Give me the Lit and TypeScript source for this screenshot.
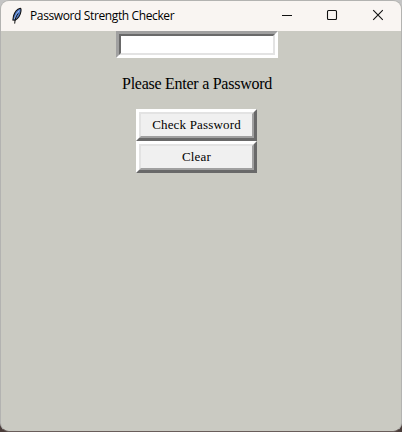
import { LitElement, html, css } from "lit";
import { customElement } from "lit/decorators.js";

@customElement("app-root")
export class AppRoot extends LitElement {
  static styles = css`
    :host {
      display: block;
      width: 402px;
      height: 432px;
      overflow: hidden;
      background: linear-gradient(#c4c4c4 0 38px, #8fa5b5 48px 66px, #aaa 72px 400px, #4a3d3a 412px);
    }
    * { box-sizing: border-box; }
    .window {
      width: 402px;
      height: 432px;
      border: 1px solid #b3b3b1;
      border-bottom-color: #695e5b;
      border-radius: 9px;
      overflow: hidden;
      background: #cacac2;
      display: flex;
      flex-direction: column;
    }
    .titlebar {
      flex: none;
      height: 30px;
      background: #f9f5f2;
      display: flex;
      align-items: center;
      font: 12px/16px "Open Sans", "Noto Sans", sans-serif;
      color: #000;
    }
    .feather { margin-left: 9px; flex: none; }
    .title { margin-left: 8px; letter-spacing: -0.38px; flex: 1; white-space: nowrap; }
    .controls { flex: none; }
    .client {
      flex: 1;
      display: flex;
      flex-direction: column;
      align-items: center;
      width: 392px;
      font-family: "Liberation Serif", serif;
      color: #000;
    }
    .edge { border: 3px solid; }
    .inner { border: 2px solid; height: 100%; }
    .entry {
      width: 162px;
      height: 27px;
      border-color: #a0a0a0 #fff #fff #a0a0a0;
    }
    .entry .inner {
      border-color: #696969 #e3e3e3 #e3e3e3 #696969;
      background: #fff;
    }
    .prompt {
      margin-top: 16px;
      height: 35px;
      font-size: 16px;
      line-height: 20px;
      letter-spacing: -0.26px;
      white-space: nowrap;
    }
    .button {
      width: 121px;
      height: 32px;
      margin-right: 1px;
      border-color: #fff #696969 #696969 #fff;
    }
    .button .inner {
      border-color: #e3e3e3 #a0a0a0 #a0a0a0 #e3e3e3;
      background: #f0f0f0;
      display: flex;
      align-items: center;
      justify-content: center;
      font-size: 13px;
      line-height: 16px;
      letter-spacing: 0.17px;
      white-space: nowrap;
    }
  `;

  render() {
    return html`
      <div class="window">
        <div class="titlebar">
          <svg class="feather" width="12" height="18" viewBox="-0.5 0 12 18">
            <path d="M9.8 1.2C7 2 4 5.5 3 9L2.4 13L4.6 13.3C7.5 11.5 10 7.5 10.4 4.5C10.6 3 10.6 1 9.8 1.2Z" fill="#4c78c8" stroke="#111" stroke-width="1.1" />
            <path d="M8.8 3.5C6.5 6 4.8 9 4.2 12" fill="none" stroke="#a9c6f2" stroke-width="1" />
            <path d="M7.6 6.4C5.6 9 4.4 12 4.2 16.6" fill="none" stroke="#111" stroke-width="1" />
          </svg>
          <span class="title">Password Strength Checker</span>
          <svg class="controls" width="132" height="30" viewBox="269 1 132 30" fill="none" stroke="#111">
            <path d="M282 15.5H292" />
            <rect x="327.5" y="10.5" width="9" height="9" rx="1" stroke-width="1.1" />
            <path d="M373.2 10.2L382.8 19.8M382.8 10.2L373.2 19.8" stroke-width="1.1" />
          </svg>
        </div>
        <div class="client">
          <div class="edge entry"><div class="inner"></div></div>
          <div class="prompt">Please Enter a Password</div>
          <div class="edge button"><div class="inner">Check Password</div></div>
          <div class="edge button"><div class="inner">Clear</div></div>
        </div>
      </div>
    `;
  }
}
